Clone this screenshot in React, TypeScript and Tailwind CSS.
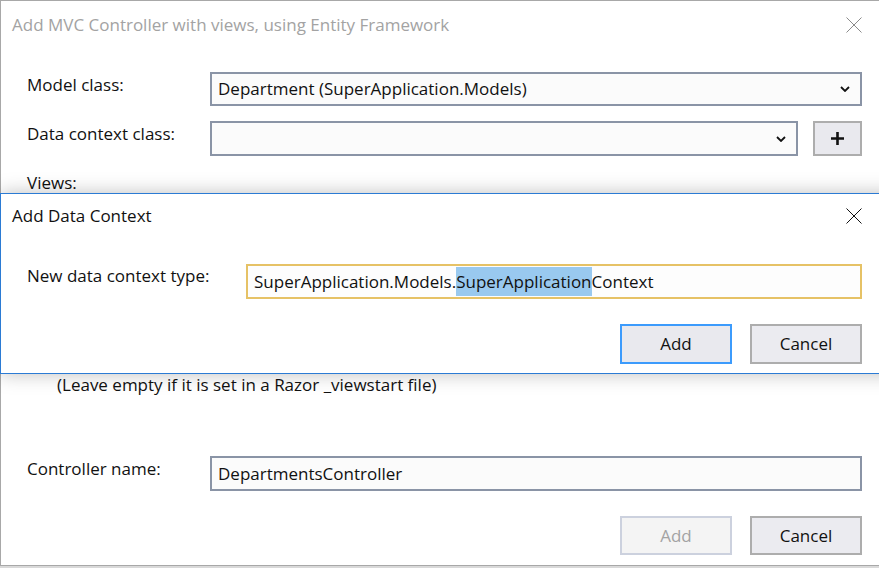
const font = { fontFamily: '"Open Sans", "Noto Sans", sans-serif' }

const Chevron = () => (
  <svg width="10" height="6" viewBox="0 0 10 6" className="shrink-0">
    <path d="M1 1 L5 5 L9 1" fill="none" stroke="#111" strokeWidth="1.8" />
  </svg>
)

const CloseX = ({ color }: { color: string }) => (
  <svg width="16" height="16" viewBox="0 0 16 16">
    <path d="M0.5 0.5 L15.5 15.5 M15.5 0.5 L0.5 15.5" stroke={color} strokeWidth="1" fill="none" />
  </svg>
)

const Label = ({ children }: { children: React.ReactNode }) => (
  <div className="w-[183px] shrink-0 pt-[1px] text-[17px] leading-[24px] text-[#111]">{children}</div>
)

const Button = ({ children, variant }: { children: React.ReactNode; variant: "primary" | "normal" | "disabled" }) => {
  const cls =
    variant === "primary"
      ? "border-[#3c9bfc] bg-[#e9e9ee] text-[#111]"
      : variant === "disabled"
      ? "border-[#ccd1de] bg-[#f4f4f4] text-[#a3a3a3]"
      : "border-[#adadad] bg-[#ebebf0] text-[#111]"
  return (
    <div className={`flex h-full w-[112px] items-center justify-center border-2 text-[17px] ${cls}`}>{children}</div>
  )
}

export default function App() {
  return (
    <div className="relative h-[568px] w-[879px] overflow-hidden bg-[#d9d9d9]" style={font}>
      {/* outer dialog */}
      <div className="flex h-[566px] w-[900px] flex-col border-l border-t border-b border-[#a8a8a8] bg-white">
        <div className="flex h-[48px] shrink-0 items-center justify-between pl-[11px] pr-[38px]">
          <span className="text-[17px] text-[#a3a3a3]">Add MVC Controller with views, using Entity Framework</span>
          <CloseX color="#8a8a8a" />
        </div>

        <div className="flex w-[879px] flex-col pl-[26px] pr-[18px]">
          <div className="mt-[23px] flex h-[34px]">
            <Label>Model class:</Label>
            <div className="flex flex-1 items-center justify-between border-2 border-[#8a94a6] bg-[#fbfbfb] pl-[6px] pr-[10px]">
              <span className="text-[17px] text-[#111]">Department (SuperApplication.Models)</span>
              <Chevron />
            </div>
          </div>

          <div className="mt-[15px] flex h-[35px]">
            <Label>Data context class:</Label>
            <div className="flex flex-1 items-center justify-end border-2 border-[#8a94a6] bg-[#fbfbfb] pr-[10px]">
              <Chevron />
            </div>
            <div className="ml-[15px] flex w-[49px] items-center justify-center border-2 border-[#adadad] bg-[#e9e9ee]">
              <svg width="15" height="15" viewBox="0 0 15 15">
                <path d="M7.5 1 V14 M1 7.5 H14" stroke="#111" strokeWidth="2.6" fill="none" />
              </svg>
            </div>
          </div>

          <div className="mt-[15px] text-[17px] leading-[24px] text-[#111]">Views:</div>

          <div className="mt-[178px] pl-[30px] text-[17px] leading-[24px] text-[#111]">
            (Leave empty if it is set in a Razor _viewstart file)
          </div>

          <div className="mt-[59px] flex h-[35px]">
            <Label>Controller name:</Label>
            <div className="flex flex-1 items-center border-2 border-[#8a94a6] bg-[#fbfbfb] pl-[6px]">
              <span className="text-[17px] text-[#111]">DepartmentsController</span>
            </div>
          </div>

          <div className="mt-[25px] flex h-[39px] justify-end gap-[18px]">
            <Button variant="disabled">Add</Button>
            <Button variant="normal">Cancel</Button>
          </div>
        </div>
      </div>

      {/* Add Data Context modal */}
      <div className="absolute left-0 top-[193px] flex h-[181px] w-[900px] flex-col border border-[#2b7bd4] bg-white shadow-[0_0_18px_rgba(0,0,0,0.25)]">
        <div className="flex h-[44px] shrink-0 items-center justify-between pl-[11px] pr-[37px]">
          <span className="text-[17px] text-[#111]">Add Data Context</span>
          <CloseX color="#111" />
        </div>
        <div className="flex w-[878px] flex-col pl-[26px] pr-[17px]">
          <div className="mt-[26px] flex h-[35px]">
            <div className="w-[219px] shrink-0 text-[17px] leading-[24px] text-[#111]">New data context type:</div>
            <div className="flex flex-1 items-center border-2 border-[#e6c266] bg-[#fdfdfd] pl-[6px]">
              <span className="text-[17px] text-[#111]">
                SuperApplication.Models.
                <span className="bg-[#99c9ef] py-[3px]">SuperApplication</span>
                Context
              </span>
            </div>
          </div>
          <div className="mt-[25px] flex h-[40px] justify-end gap-[18px]">
            <Button variant="primary">Add</Button>
            <Button variant="normal">Cancel</Button>
          </div>
        </div>
      </div>
    </div>
  )
}
